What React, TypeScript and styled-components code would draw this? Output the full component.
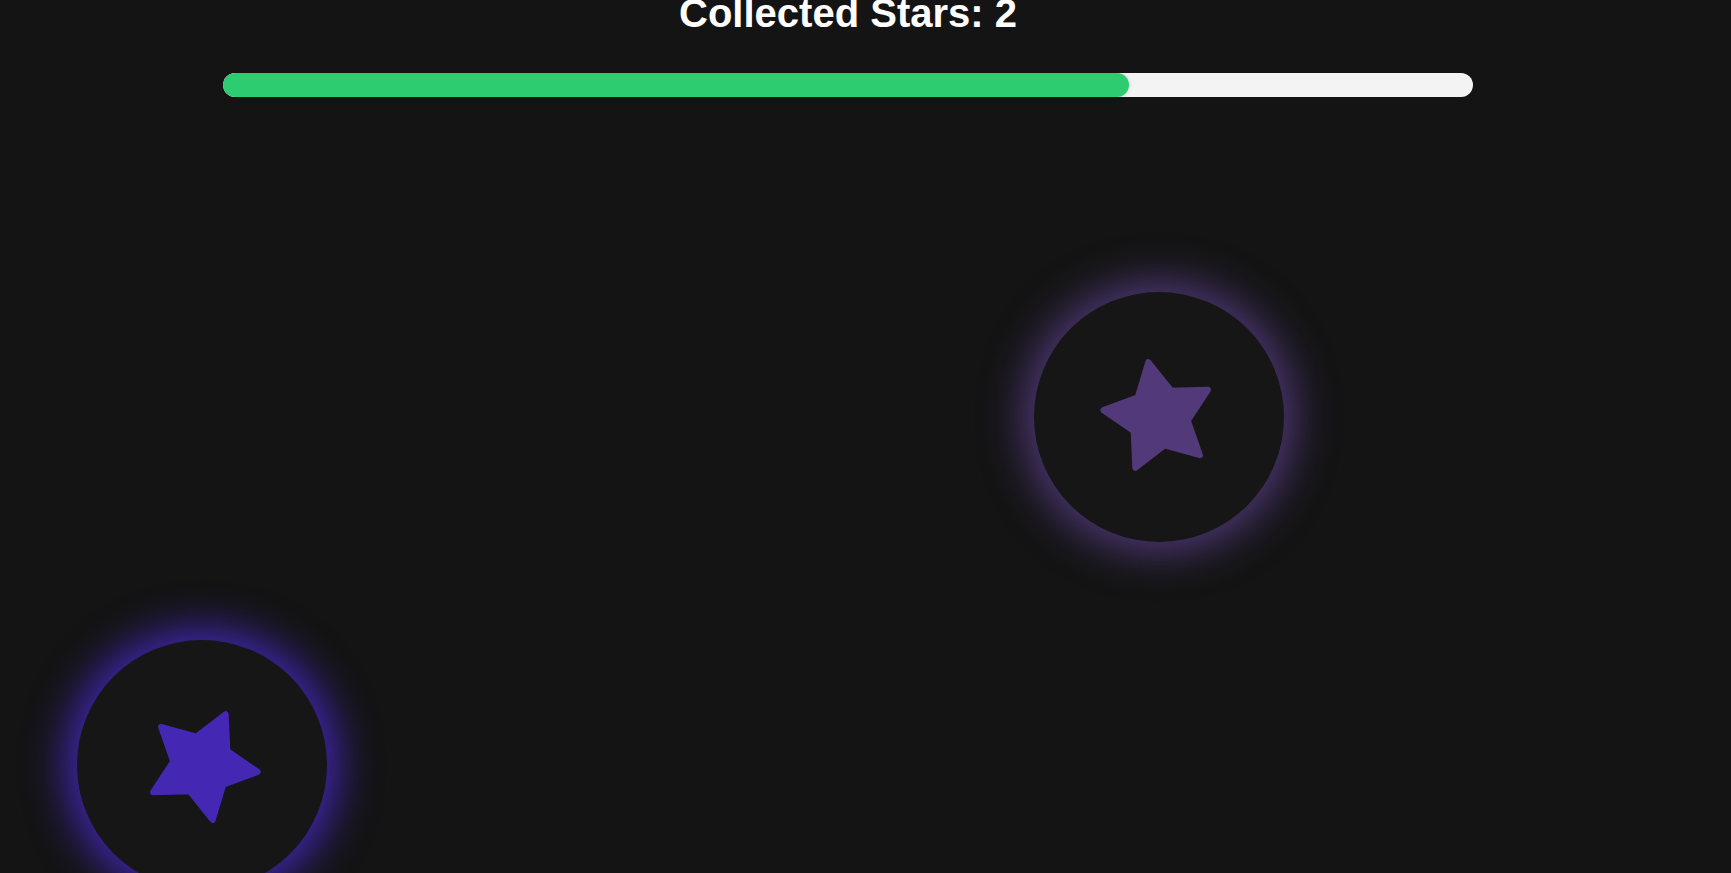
import React from "react";
import styled, { createGlobalStyle } from "styled-components";

const GlobalStyle = createGlobalStyle`
    * {
        box-sizing: border-box;
    }
    html, body {
        margin: 0;
        padding: 0;
        background: #141414;
        overflow: hidden;
    }
`;

const Page = styled.div`
    position: relative;
    width: 100%;
    height: 100vh;
    overflow: hidden;
    background: #141414;
    font-family: "Liberation Sans", Arial, sans-serif;
`;

const Header = styled.header`
    display: flex;
    flex-direction: column;
    align-items: center;
    gap: 37px;
    width: 1696px;
    margin-top: -10px;
`;

const Title = styled.h1`
    margin: 0;
    color: #ffffff;
    font-size: 40px;
    line-height: 46px;
    font-weight: 700;
`;

const Track = styled.div`
    width: 1250px;
    height: 24px;
    border-radius: 12px;
    background: #f3f3f3;
    overflow: hidden;
`;

const Fill = styled.div`
    height: 100%;
    border-radius: 12px;
    background: #2ecc71;
    box-shadow: 0 0 4px rgba(0, 0, 0, 0.15);
`;

const Orb = styled.div<{ $x: number; $y: number; $glow: string }>`
    position: absolute;
    left: ${(p) => p.$x - 125}px;
    top: ${(p) => p.$y - 125}px;
    width: 250px;
    height: 250px;
    border-radius: 50%;
    background: #161616;
    box-shadow: 0 0 40px 12px ${(p) => p.$glow};
    display: flex;
    align-items: center;
    justify-content: center;
`;

const starPoints = (() => {
    const pts: string[] = [];
    for (let i = 0; i < 10; i++) {
        const r = i % 2 === 0 ? 56 : 29;
        const a = (Math.PI / 5) * i - Math.PI / 2;
        pts.push(`${(60 + r * Math.cos(a)).toFixed(2)},${(60 + r * Math.sin(a)).toFixed(2)}`);
    }
    return pts.join(" ");
})();

const Star: React.FC<{ color: string; angle: number }> = ({ color, angle }) => (
    <svg width="120" height="120" viewBox="0 0 120 120" style={{ transform: `rotate(${angle}deg)` }}>
        <polygon points={starPoints} fill={color} stroke={color} strokeWidth="6" strokeLinejoin="round" />
    </svg>
);

const orbs = [
    { x: 1159, y: 417, color: "#523a7a", glow: "rgba(86, 60, 130, 0.85)", angle: -11 },
    { x: 202, y: 765, color: "#4428b4", glow: "rgba(70, 40, 190, 0.9)", angle: 25 },
];

export default function App() {
    const collected = 2;
    const progress = 72.5;

    return (
        <>
            <GlobalStyle />
            <Page>
                <Header>
                    <Title>Collected Stars: {collected}</Title>
                    <Track>
                        <Fill style={{ width: `${progress}%` }} />
                    </Track>
                </Header>
                {orbs.map((o, i) => (
                    <Orb key={i} $x={o.x} $y={o.y} $glow={o.glow}>
                        <Star color={o.color} angle={o.angle} />
                    </Orb>
                ))}
            </Page>
        </>
    );
}
